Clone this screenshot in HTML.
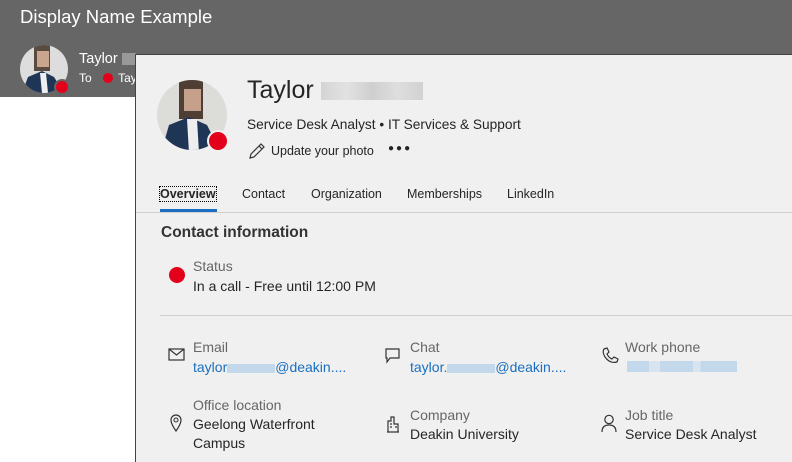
<!DOCTYPE html>
<html><head><meta charset="utf-8"><style>
*{margin:0;padding:0;box-sizing:border-box}
body{width:792px;height:462px;overflow:hidden;position:relative;background:#fff;font-family:"Liberation Sans",sans-serif;color:#252525}
.a{position:absolute;white-space:nowrap}
.top{left:0;top:0;width:792px;height:97px;background:#666}
.card{left:135px;top:54px;width:657px;height:408px;background:#f0f0f0;border-left:1px solid #444;border-top:1px solid #444}
.lbl{font-size:14px;color:#666}
.val{font-size:14px;color:#252525}
.link{font-size:14px;color:#1a6fc0}
.blur{display:inline-block;vertical-align:middle}
</style></head><body>
<div class="a top"></div>
<div class="a" style="left:20px;top:6px;font-size:18.5px;color:#fff">Display Name Example</div>
<svg class="a" style="left:20px;top:45px" width="50" height="50" viewBox="0 0 50 50">
<clipPath id="c1"><circle cx="24" cy="24" r="24"/></clipPath>
<g clip-path="url(#c1)"><rect width="48" height="48" fill="#ddd"/><rect x="14" y="0" width="16" height="26" fill="#5a4a40"/><rect x="17" y="6" width="12" height="16" fill="#c9a590"/><path d="M2 48 L8 32 L22 26 L34 32 L44 48Z" fill="#1f3556"/><path d="M20 28 L26 28 L28 48 L22 48Z" fill="#eee"/></g>
<circle cx="42" cy="42" r="7" fill="#e3001b" stroke="#666" stroke-width="2"/></svg>
<div class="a" style="left:79px;top:51px;font-size:14.5px;color:#fff">Taylor <span class="blur" style="width:14px;height:12px;background:#999"></span></div>
<div class="a" style="left:79px;top:71px;font-size:12px;color:#fff">To <span style="display:inline-block;width:10px;height:10px;border-radius:50%;background:#e3001b;margin:0 2px 0 8px;vertical-align:-1px"></span> Tay</div>
<div class="a card"></div>
<svg class="a" style="left:157px;top:79px" width="72" height="74" viewBox="0 0 72 74">
<clipPath id="c2"><circle cx="35" cy="36" r="35"/></clipPath>
<g clip-path="url(#c2)"><rect width="72" height="74" fill="#dcdcd8"/><rect x="22" y="0" width="24" height="40" fill="#4e3e34"/><rect x="27" y="10" width="17" height="22" fill="#c5a08a"/><path d="M4 74 L12 46 L32 38 L50 46 L64 74Z" fill="#1f3556"/><path d="M30 40 L40 40 L42 74 L32 74Z" fill="#eee"/></g>
<circle cx="61" cy="62" r="10" fill="#e3001b" stroke="#f0f0f0" stroke-width="2"/></svg>
<div class="a" style="left:247px;top:76px;font-size:25px;color:#252525">Taylor <span class="blur" style="width:102px;height:18px;background:linear-gradient(90deg,#d4d4d4,#e2e2e2,#cfcfcf,#dedede,#d2d2d2)"></span></div>
<div class="a val" style="left:247px;top:117px;font-size:13.7px">Service Desk Analyst • IT Services &amp; Support</div>
<svg class="a" style="left:248px;top:142px" width="18" height="18" viewBox="0 0 18 18"><path d="M2 16 L3 12 L13 2 L16 5 L6 15 Z M11 4 L14 7" fill="none" stroke="#333" stroke-width="1.2"/></svg>
<div class="a" style="left:271px;top:144px;font-size:12.5px">Update your photo</div>
<div class="a" style="left:388px;top:143px;font-size:10px;letter-spacing:2px">●●●</div>
<div class="a" style="left:160px;top:187px;font-size:12.5px;font-weight:bold;outline:1px dotted #000">Overview</div>
<div class="a" style="left:160px;top:209px;width:57px;height:3px;background:#1a6fc0"></div>
<div class="a" style="left:242px;top:187px;font-size:12.5px">Contact</div>
<div class="a" style="left:311px;top:187px;font-size:12.5px">Organization</div>
<div class="a" style="left:407px;top:187px;font-size:12.5px">Memberships</div>
<div class="a" style="left:507px;top:187px;font-size:12.5px">LinkedIn</div>
<div class="a" style="left:136px;top:212px;width:656px;height:1px;background:#d0d0d0"></div>
<div class="a" style="left:161px;top:224px;font-size:15.5px;font-weight:bold;color:#333">Contact information</div>
<div class="a" style="left:169px;top:267px;width:16px;height:16px;border-radius:50%;background:#e3001b"></div>
<div class="a lbl" style="left:193px;top:258px">Status</div>
<div class="a val" style="left:193px;top:278px">In a call - Free until 12:00 PM</div>
<div class="a" style="left:160px;top:315px;width:632px;height:1px;background:#d0d0d0"></div>
<svg class="a" style="left:168px;top:348px" width="18" height="14" viewBox="0 0 18 14"><rect x="1" y="1" width="15" height="11" fill="none" stroke="#333" stroke-width="1.2"/><path d="M1 1 L8.5 7 L16 1" fill="none" stroke="#333" stroke-width="1.2"/></svg>
<div class="a lbl" style="left:193px;top:339px">Email</div>
<div class="a link" style="left:193px;top:359px">taylor<span class="blur" style="width:48px;height:9px;background:#c4d8ec"></span>@deakin....</div>
<svg class="a" style="left:385px;top:348px" width="16" height="16" viewBox="0 0 16 16"><path d="M1 1 H14 V10 H5 L2 14 V10 H1 Z" fill="none" stroke="#333" stroke-width="1.2"/></svg>
<div class="a lbl" style="left:410px;top:339px">Chat</div>
<div class="a link" style="left:410px;top:359px">taylor.<span class="blur" style="width:48px;height:9px;background:#c4d8ec"></span>@deakin....</div>
<svg class="a" style="left:601px;top:347px" width="18" height="18" viewBox="0 0 18 18"><path d="M3 2 L6 1 L8 5 L6 7 Q8 11 11 12 L13 10 L17 12 L16 15 Q9 17 4 10 Q1 5 3 2Z" fill="none" stroke="#333" stroke-width="1.2"/></svg>
<div class="a lbl" style="left:625px;top:339px">Work phone</div>
<div class="a" style="left:627px;top:361px;width:110px;height:11px;background:linear-gradient(90deg,#c4d8ec 0 20%,#d8e4f0 20% 30%,#c4d8ec 30% 60%,#d8e4f0 60% 67%,#c4d8ec 67%)"></div>
<svg class="a" style="left:170px;top:414px" width="12" height="18" viewBox="0 0 12 18"><path d="M6 17 Q1 10 1 6 A5 5 0 0 1 11 6 Q11 10 6 17Z" fill="none" stroke="#333" stroke-width="1.2"/><circle cx="6" cy="6" r="2" fill="none" stroke="#333" stroke-width="1.1"/></svg>
<div class="a lbl" style="left:193px;top:397px">Office location</div>
<div class="a val" style="left:193px;top:416px">Geelong Waterfront</div>
<div class="a val" style="left:193px;top:435px">Campus</div>
<svg class="a" style="left:386px;top:416px" width="14" height="17" viewBox="0 0 14 17"><path d="M2 16 V5 H5 V1 H8 V8 H12 V16 Z M1 16 H13 M4 8 H6 M4 11 H6 M9 11 H11" fill="none" stroke="#333" stroke-width="1.2"/></svg>
<div class="a lbl" style="left:410px;top:407px">Company</div>
<div class="a val" style="left:410px;top:426px">Deakin University</div>
<svg class="a" style="left:600px;top:414px" width="18" height="19" viewBox="0 0 18 19"><circle cx="9" cy="5.5" r="4.2" fill="none" stroke="#333" stroke-width="1.2"/><path d="M2 18 Q2 11 9 11 Q16 11 16 18" fill="none" stroke="#333" stroke-width="1.2"/></svg>
<div class="a lbl" style="left:625px;top:407px">Job title</div>
<div class="a val" style="left:625px;top:426px">Service Desk Analyst</div>
</body></html>
